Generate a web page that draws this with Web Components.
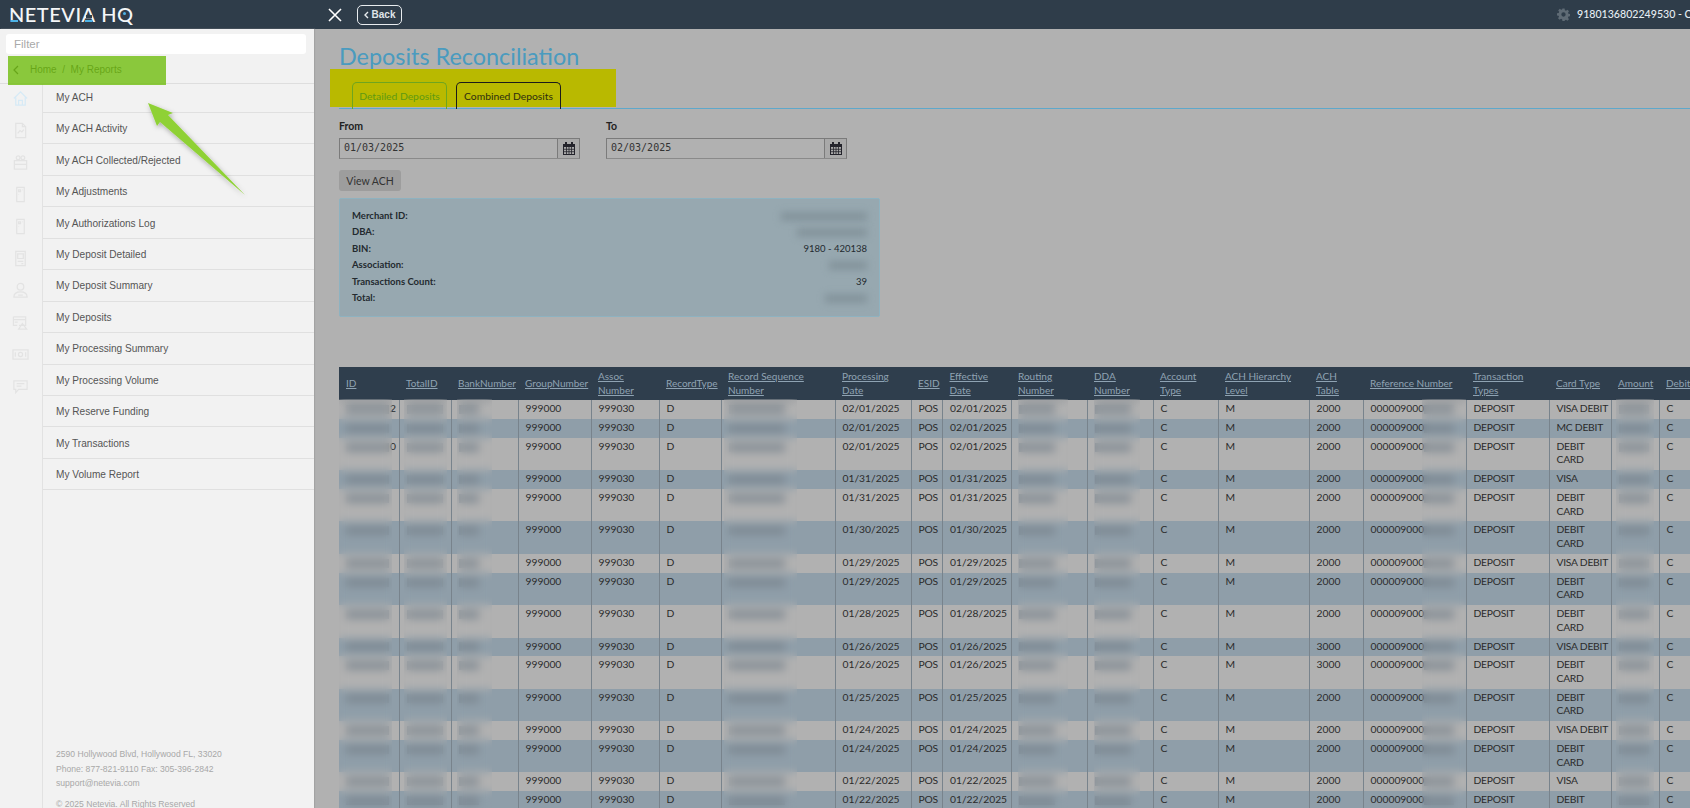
<!DOCTYPE html>
<html lang="en">
<head>
<meta charset="utf-8">
<title>Deposits Reconciliation</title>
<style>
    html, body { margin: 0; height: 100%; overflow: hidden; background: #b1b1b1; }
    body { font-family: Lato, "Liberation Sans", sans-serif; }
</style>
</head>
<body>
<hq-app>
    <hq-header slot="header"></hq-header>
    <hq-sidebar slot="side">
        <side-link>My ACH</side-link>
        <side-link>My ACH Activity</side-link>
        <side-link>My ACH Collected/Rejected</side-link>
        <side-link>My Adjustments</side-link>
        <side-link>My Authorizations Log</side-link>
        <side-link>My Deposit Detailed</side-link>
        <side-link>My Deposit Summary</side-link>
        <side-link>My Deposits</side-link>
        <side-link>My Processing Summary</side-link>
        <side-link>My Processing Volume</side-link>
        <side-link>My Reserve Funding</side-link>
        <side-link>My Transactions</side-link>
        <side-link>My Volume Report</side-link>
    </hq-sidebar>
    <main-view slot="main"></main-view>
    <hq-callouts slot="over"></hq-callouts>
</hq-app>

<script>
class HqApp extends HTMLElement {
    constructor() {
        super();
        this.attachShadow({ mode: 'open' }).innerHTML = `
            <style>
                :host { display: grid; grid-template: 29px 779px / 314px 1376px; width: 1690px; height: 808px; overflow: hidden; position: relative; }
                .head { grid-column: 1 / 3; }
                .main { overflow: hidden; }
            </style>
            <div class="head"><slot name="header"></slot></div>
            <slot name="side"></slot>
            <div class="main"><slot name="main"></slot></div>
            <slot name="over"></slot>
        `;
    }
}

class HqHeader extends HTMLElement {
    constructor() {
        super();
        this.attachShadow({ mode: 'open' }).innerHTML = `
            <style>
                :host { display: flex; align-items: center; height: 29px; background: #2f3d4a; color: #fff; overflow: hidden; white-space: nowrap; }
                .logo { position: relative; width: 327px; padding-left: 9px; box-sizing: border-box; font: 500 20px/29px Lato, sans-serif; letter-spacing: .5px; color: #f4f6f8; }
                .a { position: relative; display: inline-block; }
                .a::after { content: ''; position: absolute; left: 4px; right: 4px; top: 15px; height: 3px; background: #2f3d4a; }
                .tick { position: absolute; top: 20px; height: 2px; width: 7px; background: #4db3e6; }
                .dot { position: absolute; left: 123px; top: 12px; width: 3px; height: 3px; border-radius: 50%; background: #4db3e6; }
                .close { width: 30px; height: 29px; display: flex; align-items: center; }
                .back { box-sizing: border-box; width: 45px; height: 20px; border: 1px solid #e8ecef; border-radius: 5px; font: 700 10px/18px "Liberation Sans", sans-serif; color: #dfe4e8; display: flex; align-items: center; justify-content: center; gap: 3px; }
                .acct { margin-left: auto; display: flex; align-items: center; gap: 7px; font: 500 10.600px/29px Lato, sans-serif; color: #e6edf3; width: 133px; flex: none; overflow: hidden; }
            </style>
            <div class="logo">NETEVI<span class="a">A</span> HQ<i class="tick" style="left:11px"></i><i class="tick" style="left:85px"></i><i class="dot"></i></div>
            <div class="close">
                <svg width="16" height="16" viewBox="0 0 16 16"><path d="M2 2l12 12M14 2L2 14" stroke="#fff" stroke-width="1.6" fill="none"/></svg>
            </div>
            <div class="back"><svg width="5" height="8" viewBox="0 0 5 8"><path d="M4 1L1 4l3 3" stroke="#e8ecef" stroke-width="1.4" fill="none"/></svg>Back</div>
            <div class="acct">
                <svg width="13" height="13" viewBox="0 0 24 24" style="flex:none"><path fill="#5f6b75" d="M10 1h4l.6 3.2 2 .8L19.300 3.200l2.800 2.800-1.800 2.700.8 2 3.200.6v4l-3.200.6-.8 2 1.800 2.700-2.800 2.800-2.700-1.800-2 .8L14 24h-4l-.6-3.200-2-.8-2.700 1.800-2.800-2.800 1.800-2.700-.8-2L0 13.700V9.700l3.200-.6.8-2L2.200 4.400 5 1.600l2.700 1.800 1.700-.8zM12 8a4 4 0 100 8 4 4 0 000-8z"/></svg>
                <span>9180136802249530 - C</span>
            </div>
        `;
    }
}

const SIDE_ICONS = [
    '<path d="M2 9l7-7 7 7M4 8v8h10V8M7 16v-5h4v5"/>',
    '<path d="M4 1.500h7l3.500 3.500v11.500H4zM11 1.500V5h3.500M6 12l2.500-3 2 1.500 2-2.500"/>',
    '<circle cx="6.500" cy="4" r="2"/><circle cx="11.500" cy="4" r="2"/><path d="M2.500 7h13v9h-13zM2.500 11h13"/>',
    '<path d="M5 1.500h8v15H5zM7 4h2v2H7zM11 4h.5M7 9h.5"/>',
    '<path d="M5 1.500h8v15H5zM7 4h2v2H7zM11 4h.5M7 9h.5"/>',
    '<path d="M4 1.500h10v15H4zM6 4h6v5H6zM6 12h6M10 14.500h2"/>',
    '<circle cx="9" cy="5" r="3.500"/><path d="M2 16c0-4 3-5.500 7-5.500s7 1.500 7 5.500zM6.500 14h5"/>',
    '<path d="M1.500 3h13v9h-7M1.500 3v9h4M1.500 6h13M3 8.500h3M7 16l4-6 4.500 6z"/>',
    '<path d="M1 4h16v10H1zM3.500 6.500v5M14.500 6.500v5"/><circle cx="9" cy="9" r="2.200"/>',
    '<path d="M2 3h14v9H7l-3 3.500V12H2zM5 6h8M5 8.500h5"/>'
];

class HqSidebar extends HTMLElement {
    constructor() {
        super();
        const icons = SIDE_ICONS.map((d, i) => `
            <div class="ic"><svg width="17" height="17" viewBox="0 0 18 18" fill="none" stroke="${i === 0 ? '#d6eaf6' : '#e3e3e3'}" stroke-width="1.300">${d}</svg></div>
        `).join('');
        this.attachShadow({ mode: 'open' }).innerHTML = `
            <style>
                :host { display: flex; flex-direction: column; height: 779px; background: #f2f2f2; overflow: hidden; position: relative; box-shadow: 1px 0 1px #a3a3a3; z-index: 1; }
                .filter { margin: 5px 8px 0 6px; height: 20px; background: #fff; border-radius: 3px; font: 11.500px/20px "Liberation Sans", sans-serif; color: #a9a9a9; padding-left: 8px; }
                .crumb { height: 29px; display: flex; align-items: center; gap: 11px; padding: 2px 0 0 13px; box-sizing: border-box; font: 10px "Liberation Sans", sans-serif; color: #333; }
                .body { flex: 1; display: flex; border-top: 1px solid #dedede; min-height: 0; }
                .icons { width: 42px; flex: none; border-right: 1px solid #e2e2e2; box-sizing: content-box; }
                .icons .list { margin-top: -2px; }
                .ic { height: 32px; display: flex; align-items: center; justify-content: center; padding-right: 2px; }
                .right { flex: 1; display: flex; flex-direction: column; min-width: 0; }
                .foot { margin: auto 0 -3px; padding: 0 0 0 13px; font: 8.600px/14.500px "Liberation Sans", sans-serif; color: #a8a8a8; }
                .foot p { margin: 0; }
                .foot p.c { margin-top: 6px; }
            </style>
            <div class="filter">Filter</div>
            <div class="crumb">
                <svg width="6" height="10" viewBox="0 0 6 10"><path d="M5 1L1 5l4 4" stroke="#333" stroke-width="1.200" fill="none"/></svg>
                <span>Home&nbsp;&nbsp;/&nbsp; My Reports</span>
            </div>
            <div class="body">
                <div class="icons"><div class="list">${icons}</div></div>
                <div class="right">
                    <slot></slot>
                    <div class="foot">
                        <p>2590 Hollywood Blvd, Hollywood FL, 33020</p>
                        <p>Phone: 877-821-9110 Fax: 305-396-2842</p>
                        <p>support@netevia.com</p>
                        <p class="c">© 2025 Netevia. All Rights Reserved</p>
                    </div>
                </div>
            </div>
        `;
    }
}

class SideLink extends HTMLElement {
    constructor() {
        super();
        this.attachShadow({ mode: 'open' }).innerHTML = `
            <style>
                :host { display: flex; align-items: center; height: 31.440px; box-sizing: border-box; padding: 1px 0 0 13px; border-bottom: 1.500px solid #e0e0e0; font: 10.100px "Liberation Sans", sans-serif; color: #555; }
                :host(:first-child) { height: 29px; padding-top: 0; padding-bottom: 2px; }
            </style>
            <slot></slot>
        `;
    }
}

class MainView extends HTMLElement {
    constructor() {
        super();
        this.attachShadow({ mode: 'open' }).innerHTML = `
            <style>
                :host { display: block; padding-left: 25px; width: 1351px; color: #222; }
                h1 { margin: 0; padding-top: 15px; height: 24px; font: 400 23.400px/25px Lato, sans-serif; color: #4a9bbf; }
            </style>
            <h1>Deposits Reconciliation</h1>
            <deposit-tabs></deposit-tabs>
            <deposit-filters></deposit-filters>
            <info-panel></info-panel>
            <report-table></report-table>
        `;
    }
}

class DepositTabs extends HTMLElement {
    constructor() {
        super();
        this.attachShadow({ mode: 'open' }).innerHTML = `
            <style>
                :host { display: flex; align-items: flex-end; gap: 9px; position: relative; box-sizing: border-box; margin-top: 13px; height: 27px; padding-left: 13px; box-shadow: 0 1px 0 #5ea8cb; z-index: 0; }
                :host::before { content: ''; position: absolute; z-index: -1; left: -9px; top: -12px; width: 286px; height: 38px; background: #b9b900; }
                .tab { box-sizing: border-box; height: 27px; margin-bottom: -1px; border: 1px solid; border-bottom: 0; border-radius: 5px 5px 0 0; display: flex; align-items: center; justify-content: center; font: 400 10.300px Lato, sans-serif; }
                .on { width: 95px; border-color: #6ea51f; color: #5f9a12; }
                .off { width: 105px; border-color: #1b1b1b; color: #2d2d10; }
            </style>
            <div class="tab on">Detailed Deposits</div>
            <div class="tab off">Combined Deposits</div>
        `;
    }
}

class DateField extends HTMLElement {
    constructor() {
        super();
        this.attachShadow({ mode: 'open' }).innerHTML = `
            <style>
                :host { display: block; width: 241px; }
                label { display: block; font: 700 10.500px/13px Lato, sans-serif; color: #222; margin-bottom: 5px; }
                .box { display: flex; height: 21px; box-sizing: border-box; border: 1px solid #7b7b7b; border-bottom-color: #8a8a8a; }
                .val { flex: 1; font: 10px/17px "DejaVu Sans Mono", monospace; color: #333; padding-left: 4px; }
                .cal { width: 21px; border-left: 1px solid #7b7b7b; background: #a9a9a9; display: flex; align-items: center; justify-content: center; }
            </style>
            <label></label>
            <div class="box">
                <div class="val"></div>
                <div class="cal">
                    <svg width="12" height="13" viewBox="0 0 12 13"><path fill="#23232b" d="M0 2h2V0h2v2h4V0h2v2h2v11H0zM1 5v7h10V5z"/><path stroke="#23232b" stroke-width=".8" d="M1 7.300h10M1 9.700h10M3.500 5v7M6 5v7M8.500 5v7"/></svg>
                </div>
            </div>
        `;
    }
    connectedCallback() {
        this.shadowRoot.querySelector('label').textContent = this.getAttribute('label');
        this.shadowRoot.querySelector('.val').textContent = this.getAttribute('value');
    }
}

class DepositFilters extends HTMLElement {
    constructor() {
        super();
        this.attachShadow({ mode: 'open' }).innerHTML = `
            <style>
                :host { display: block; padding-top: 12px; }
                .row { display: flex; gap: 26px; }
                button { display: block; margin-top: 11px; width: 62px; height: 21px; border: 0; border-radius: 3px; background: #9d9d9d; font: 400 10.500px Lato, sans-serif; color: #333; padding: 0; }
            </style>
            <div class="row">
                <date-field label="From" value="01/03/2025"></date-field>
                <date-field label="To" value="02/03/2025"></date-field>
            </div>
            <button type="button">View ACH</button>
        `;
    }
}

class InfoPanel extends HTMLElement {
    constructor() {
        super();
        const rows = [
            ['Merchant ID:', '<i style="width:86px"></i>'],
            ['DBA:', '<i style="width:70px"></i>'],
            ['BIN:', '9180 - 420138'],
            ['Association:', '<i style="width:38px"></i>'],
            ['Transactions Count:', '39'],
            ['Total:', '<i style="width:42px"></i>']
        ].map(r => `<div class="row"><span>${r[0]}</span><span class="v">${r[1]}</span></div>`).join('');
        this.attachShadow({ mode: 'open' }).innerHTML = `
            <style>
                :host { display: block; box-sizing: border-box; width: 541px; height: 119px; margin-top: 7px; padding: 9px 12px 0 12px; background: #97a8b0; border: 1px solid #8eb2c0; border-radius: 2px; font: 400 9.500px/16.400px Lato, sans-serif; color: #232a2f; }
                .row { display: flex; justify-content: space-between; align-items: center; height: 16.400px; }
                .row span:first-child { font-weight: 700; }
                i { display: inline-block; height: 9px; background: #84949c; filter: blur(3.500px); vertical-align: middle; }
            </style>
            ${rows}
        `;
    }
}

const TABLE_COLS = [
    ['ID', 60], ['TotalID', 52], ['BankNumber', 67], ['GroupNumber', 73], ['Assoc<br>Number', 68],
    ['RecordType', 62], ['Record Sequence<br>Number', 114], ['Processing<br>Date', 76], ['ESID', 31.500],
    ['Effective<br>Date', 68.500], ['Routing<br>Number', 76], ['DDA<br>Number', 66], ['Account<br>Type', 65],
    ['ACH Hierarchy<br>Level', 91], ['ACH<br>Table', 54], ['Reference Number', 103], ['Transaction<br>Types', 83],
    ['Card Type', 62], ['Amount', 48], ['Debit', 60]
];

// date, ach table, card type, what is left readable of the id
const TABLE_ROWS = [
    ['02/01/2025', '2000', 'VISA DEBIT', '2'],
    ['02/01/2025', '2000', 'MC DEBIT', ''],
    ['02/01/2025', '2000', 'DEBIT<br>CARD', '0'],
    ['01/31/2025', '2000', 'VISA', ''],
    ['01/31/2025', '2000', 'DEBIT<br>CARD', ''],
    ['01/30/2025', '2000', 'DEBIT<br>CARD', ''],
    ['01/29/2025', '2000', 'VISA DEBIT', ''],
    ['01/29/2025', '2000', 'DEBIT<br>CARD', ''],
    ['01/28/2025', '2000', 'DEBIT<br>CARD', ''],
    ['01/26/2025', '3000', 'VISA DEBIT', ''],
    ['01/26/2025', '3000', 'DEBIT<br>CARD', ''],
    ['01/25/2025', '2000', 'DEBIT<br>CARD', ''],
    ['01/24/2025', '2000', 'VISA DEBIT', ''],
    ['01/24/2025', '2000', 'DEBIT<br>CARD', ''],
    ['01/22/2025', '2000', 'VISA', ''],
    ['01/22/2025', '2000', 'DEBIT<br>CARD', '']
];

// columns that are smudged out in the reference: left, width
const TABLE_VEILS = [[0, 53], [65, 43], [118, 35], [385, 73], [679, 50], [755, 46], [1083, 44], [1277, 38]];

class ReportTable extends HTMLElement {
    constructor() {
        super();
        const smudge = w => `<i style="width:${w}px"></i>`;
        const colgroup = TABLE_COLS.map(c => `<col style="width:${c[1]}px">`).join('');
        const head = TABLE_COLS.map(c => `<th><u>${c[0]}</u></th>`).join('');
        const body = TABLE_ROWS.map(r => `
            <tr>
                <td>${smudge(43)}<b>${r[3]}</b></td><td>${smudge(36)}</td><td>${smudge(20)}</td>
                <td>999000</td><td>999030</td><td>D</td><td>${smudge(56)}</td>
                <td>${r[0]}</td><td class="up">POS</td><td>${r[0]}</td><td>${smudge(36)}</td><td>${smudge(36)}</td>
                <td>C</td><td>M</td><td>${r[1]}</td><td>000009000${smudge(30)}</td><td class="up">DEPOSIT</td>
                <td class="up">${r[2]}</td><td>${smudge(30)}</td><td>C</td>
            </tr>
        `).join('');
        const veils = TABLE_VEILS.map(v => `<div class="veil" style="left:${v[0]}px;width:${v[1]}px"></div>`).join('');
        this.attachShadow({ mode: 'open' }).innerHTML = `
            <style>
                :host { display: block; position: relative; width: 1351px; margin-top: 50px; font: 400 10.300px/13.500px Lato, sans-serif; color: #2b2b2b; }
                table { border-collapse: collapse; table-layout: fixed; width: 1351px; }
                th { background: #2f3e4d; color: #8fa3b3; font-weight: 400; font-size: 10px; text-align: left; padding: 3px 7px; height: 27px; white-space: nowrap; }
                td { padding: 2px 7px 3.400px; vertical-align: top; white-space: nowrap; border-left: 1px solid #78838c; overflow: hidden; }
                td:first-child { border-left: 0; }
                td.up { letter-spacing: -.25px; }
                tr:nth-child(even) td { background: #8f9ea9; }
                i { display: inline-block; height: 9px; background: #76828b; vertical-align: middle; opacity: .7; }
                b { font-weight: 400; margin-left: 1px; }
                .veil { position: absolute; top: 32px; height: 420px; backdrop-filter: blur(4px); -webkit-backdrop-filter: blur(4px); }
            </style>
            <table>
                <colgroup>${colgroup}</colgroup>
                <thead><tr>${head}</tr></thead>
                <tbody>${body}</tbody>
            </table>
            ${veils}
        `;
    }
}

class HqCallouts extends HTMLElement {
    constructor() {
        super();
        this.attachShadow({ mode: 'open' }).innerHTML = `
            <style>
                :host { display: block; position: absolute; inset: 0; pointer-events: none; z-index: 2; }
                .mark { position: absolute; left: 8px; top: 56px; width: 158px; height: 29px; background: rgba(115, 190, 20, .82); }
                svg { position: absolute; left: 0; top: 0; }
            </style>
            <div class="mark"></div>
            <svg width="320" height="220" viewBox="0 0 320 220">
                <defs><filter id="s" x="-20%" y="-20%" width="140%" height="140%"><feDropShadow dx="1" dy="2" stdDeviation="2.500" flood-color="#000" flood-opacity=".3"/></filter></defs>
                <polygon points="148,103 173,113 168,115 245,195 160,122 157,126" fill="#8fd136" filter="url(#s)"/>
            </svg>
        `;
    }
}

customElements.define('hq-app', HqApp);
customElements.define('hq-header', HqHeader);
customElements.define('hq-sidebar', HqSidebar);
customElements.define('side-link', SideLink);
customElements.define('main-view', MainView);
customElements.define('deposit-tabs', DepositTabs);
customElements.define('date-field', DateField);
customElements.define('deposit-filters', DepositFilters);
customElements.define('info-panel', InfoPanel);
customElements.define('report-table', ReportTable);
customElements.define('hq-callouts', HqCallouts);
</script>
</body>
</html>
